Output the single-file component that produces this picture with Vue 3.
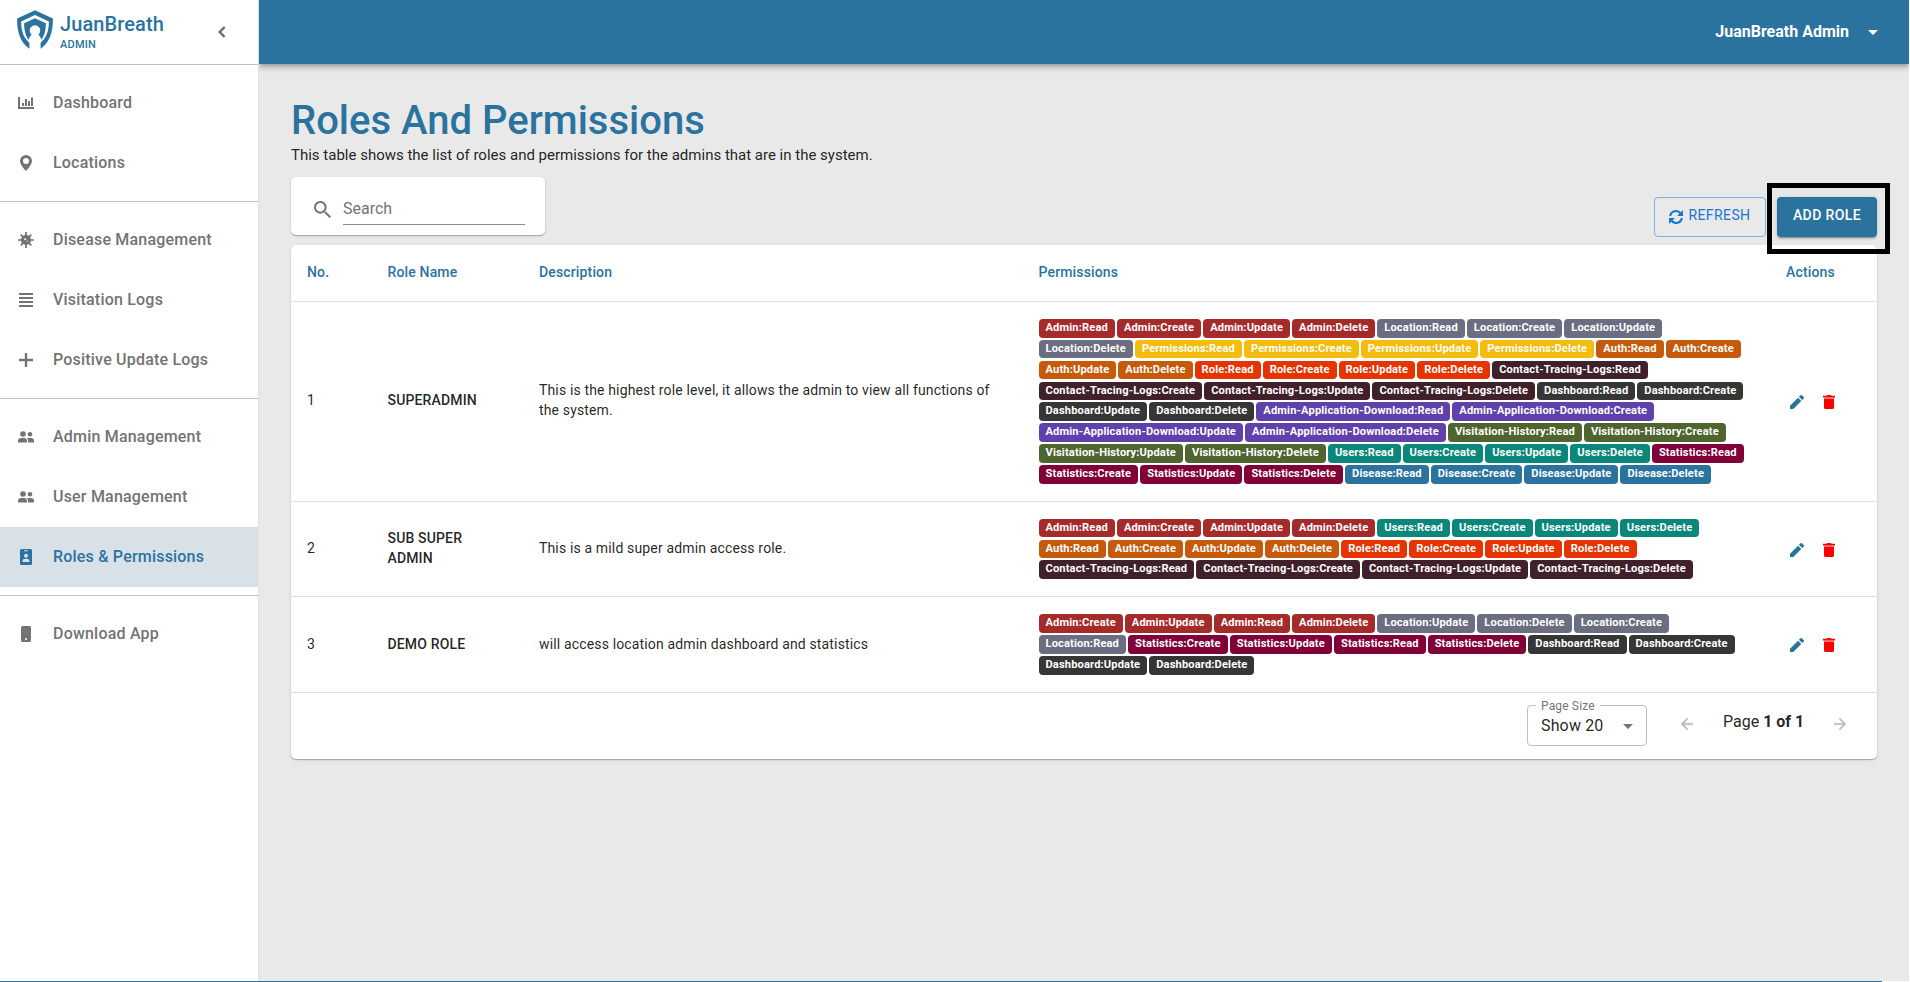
<script setup>
const groups = [
  [
    { label: 'Dashboard', icon: 'chart' },
    { label: 'Locations', icon: 'pin' },
  ],
  [
    { label: 'Disease Management', icon: 'virus' },
    { label: 'Visitation Logs', icon: 'lines' },
    { label: 'Positive Update Logs', icon: 'plus' },
  ],
  [
    { label: 'Admin Management', icon: 'people' },
    { label: 'User Management', icon: 'people' },
    { label: 'Roles & Permissions', icon: 'badge', active: true },
  ],
  [{ label: 'Download App', icon: 'phone' }],
]

// "Scope:Action,Action" expands to one chip for each action
const expand = (list) =>
  list.flatMap((entry) => {
    const [scope, actions] = entry.split(':')
    return actions.split(',').map((a) => ({ scope, text: scope + ':' + a }))
  })

const CRUD = 'Read,Create,Update,Delete'
const roles = [
  {
    name: 'SUPERADMIN',
    description: 'This is the highest role level, it allows the admin to view all functions of the system.',
    permissions: expand(
      ['Admin', 'Location', 'Permissions', 'Auth', 'Role', 'Contact-Tracing-Logs', 'Dashboard',
        'Admin-Application-Download', 'Visitation-History', 'Users', 'Statistics', 'Disease'].map((s) => s + ':' + CRUD)
    ),
  },
  {
    name: 'SUB SUPER ADMIN',
    description: 'This is a mild super admin access role.',
    permissions: expand(['Admin', 'Users', 'Auth', 'Role', 'Contact-Tracing-Logs'].map((s) => s + ':' + CRUD)),
  },
  {
    name: 'DEMO ROLE',
    description: 'will access location admin dashboard and statistics',
    permissions: expand([
      'Admin:Create,Update,Read,Delete',
      'Location:Update,Delete,Create,Read',
      'Statistics:Create,Update,Read,Delete',
      'Dashboard:Read,Create,Update,Delete',
    ]),
  },
]
</script>

<template>
  <div class="page">
    <div class="shell">
      <aside class="sidebar">
        <div class="brand">
          <svg class="logo" viewBox="51 31 108 118" fill="#2b739f">
            <path d="M105 32 159 57C160 95 150 130 122 148V130C139 116 147 95 147 66L105 46 63 66C63 95 71 116 88 130V148C60 130 50 95 51 57Z" />
            <path d="M105 56 138 71C138 94 132 112 124 121 122 113 119 109 115 106A16 16 0 1 0 95 106C91 109 88 113 86 121 78 112 72 94 72 71Z" />
          </svg>
          <div class="brand-text">
            <div class="brand-name">JuanBreath</div>
            <div class="brand-sub">ADMIN</div>
          </div>
          <svg class="collapse" viewBox="0 0 24 24" fill="#666" stroke="#666" stroke-width=".6"><path d="M15.41 7.41 14 6l-6 6 6 6 1.41-1.41L10.83 12z" /></svg>
        </div>
        <nav>
          <ul v-for="(group, gi) in groups" :key="gi" class="group">
            <li v-for="item in group" :key="item.label" class="item" :class="{ active: item.active }">
              <svg class="icon" viewBox="0 0 16 16" fill="currentColor">
                <template v-if="item.icon === 'chart'">
                  <path d="M0 2h2v10h14v2H0zM4 8h2v3H4zM7 4h2v7H7zM10 6h2v5h-2zM13 2.500h2V11h-2z" />
                </template>
                <path v-else-if="item.icon === 'pin'" fill-rule="evenodd" d="M8 0a6 6 0 0 0-6 6c0 4 6 10 6 10s6-6 6-10a6 6 0 0 0-6-6m0 9a3 3 0 1 1 0-6 3 3 0 0 1 0 6" />
                <g v-else-if="item.icon === 'virus'" stroke="currentColor" stroke-width="1.7">
                  <path d="M8 0v16M0 8h16M2.700 2.700l10.600 10.600M13.300 2.700 2.700 13.300" />
                  <circle cx="8" cy="8" r="4.200" />
                  <circle cx="7.200" cy="7.200" r="1" fill="#fff" stroke="none" />
                  <circle cx="9.300" cy="9" r=".6" fill="#fff" stroke="none" />
                </g>
                <path v-else-if="item.icon === 'lines'" d="M1 1h14v2H1zM1 5h14v2H1zM1 9h14v2H1zM1 13h14v2H1z" />
                <path v-else-if="item.icon === 'plus'" d="M6.800 1h2.400v5.800H15v2.400H9.200V15H6.800V9.200H1V6.800h5.800z" />
                <g v-else-if="item.icon === 'people'">
                  <circle cx="5" cy="5" r="2.800" />
                  <circle cx="12" cy="5.300" r="2.300" />
                  <path d="M0 13.500V12c0-2 1.500-3 3-3h3c1.800 0 3 1 3 3v1.500zM10 13.500V12c0-1.200-.4-2.200-1-3h4c2 0 3 1.300 3 3v1.500z" />
                </g>
                <path v-else-if="item.icon === 'badge'" fill-rule="evenodd" d="M3.500 0h9A1.500 1.500 0 0 1 14 1.500v13a1.500 1.500 0 0 1-1.500 1.500h-9A1.500 1.500 0 0 1 2 14.500v-13A1.500 1.500 0 0 1 3.500 0M6 1.200v1h4v-1zM8 4.800a2 2 0 1 0 0 4 2 2 0 0 0 0-4M4.500 13h7v-.7c0-1.700-1.200-2.500-2.500-2.500H7c-1.300 0-2.500.8-2.500 2.500z" />
                <path v-else fill-rule="evenodd" d="M4.500 0h7A1.500 1.500 0 0 1 13 1.500v13a1.500 1.500 0 0 1-1.500 1.500h-7A1.500 1.500 0 0 1 3 14.500v-13A1.500 1.500 0 0 1 4.500 0M8 12a1 1 0 1 0 0 2 1 1 0 0 0 0-2" />
              </svg>
              <span>{{ item.label }}</span>
            </li>
          </ul>
        </nav>
      </aside>

      <div class="content">
        <header class="topbar">
          <span class="user">JuanBreath Admin</span>
          <svg class="caret" viewBox="0 0 10 5" fill="#fff"><path d="M0 0h10L5 5z" /></svg>
        </header>

        <main>
          <h1>Roles And Permissions</h1>
          <p class="lead">This table shows the list of roles and permissions for the admins that are in the system.</p>

          <div class="toolbar">
            <div class="search card">
              <svg class="search-icon" viewBox="3 3 17.500 17.500" fill="#757575"><path d="M15.500 14h-.79l-.28-.27C15.410 12.590 16 11.110 16 9.500 16 5.910 13.090 3 9.500 3S3 5.910 3 9.500 5.910 16 9.500 16c1.610 0 3.090-.59 4.230-1.570l.27.28v.79l5 4.990L20.490 19zm-6 0C7.010 14 5 11.990 5 9.500S7.010 5 9.500 5 14 7.010 14 9.500 11.990 14 9.500 14" /></svg>
              <div class="search-field">Search</div>
            </div>
            <div class="buttons">
              <button class="btn refresh">
                <svg class="refresh-icon" viewBox="0 0 14 14" fill="none" stroke="#1976d2" stroke-width="2.100">
                  <path d="M1.200 6A5.700 5.700 0 0 1 11.600 3.600M12.800 8A5.700 5.700 0 0 1 2.400 10.400" />
                  <path d="M14 0V5.900H8.100zM0 14V8.100H5.900z" fill="#1976d2" stroke="none" />
                </svg>
                <span>REFRESH</span>
              </button>
              <button class="btn add"><span>ADD ROLE</span></button>
            </div>
          </div>

          <section class="card table">
            <div class="row head">
              <div>No.</div><div>Role Name</div><div>Description</div><div>Permissions</div><div>Actions</div>
            </div>
            <div v-for="(role, i) in roles" :key="role.name" class="row">
              <div class="cell">{{ i + 1 }}</div>
              <div class="cell role-name">{{ role.name }}</div>
              <div class="cell">{{ role.description }}</div>
              <div class="chips">
                <span v-for="p in role.permissions" :key="p.text" class="chip" :class="p.scope.toLowerCase()">{{ p.text }}</span>
              </div>
              <div class="actions">
                <svg class="edit" viewBox="0 0 14 14" fill="#2b739f"><path d="M0 14v-3.300L8 2.700 11.300 6l-8 8zM8.900 1.800 10.300.4a1.300 1.300 0 0 1 1.800 0L13.600 1.900a1.300 1.300 0 0 1 0 1.800L12.200 5.100z" /></svg>
                <svg class="delete" viewBox="0 0 12 14" fill="#f00"><path d="M0 .8h3.500L4.300 0h3.400l.8.8H12v1.700H0zM1 3.800h10v8.700A1.500 1.500 0 0 1 9.500 14h-7A1.500 1.500 0 0 1 1 12.500z" /><path d="M1 2.500h10v1.300H1z" opacity=".5" /></svg>
              </div>
            </div>
            <div class="footer">
              <fieldset class="select">
                <legend>Page Size</legend>
                <span class="select-value">Show 20</span>
                <svg class="select-caret" viewBox="0 0 10 5" fill="#757575"><path d="M0 0h10L5 5z" /></svg>
              </fieldset>
              <svg class="arrow prev" viewBox="4 4 16 16" fill="#bdbdbd" stroke="#bdbdbd" stroke-width=".6"><path d="M20 11H7.830l5.590-5.590L12 4l-8 8 8 8 1.410-1.410L7.830 13H20z" /></svg>
              <span class="page-no">Page <b>1 of 1</b></span>
              <svg class="arrow" viewBox="4 4 16 16" fill="#bdbdbd" stroke="#bdbdbd" stroke-width=".6"><path d="m12 4-1.410 1.410L16.170 11H4v2h12.170l-5.580 5.590L12 20l8-8z" /></svg>
            </div>
          </section>
        </main>
      </div>
    </div>
    <div class="bottom-line"></div>
  </div>
</template>

<style>
body { background: #fff; }
</style>

<style scoped>
*, *::after { box-sizing: border-box; }
.page { height: 982px; padding-right: 1px; font-family: Roboto, "Liberation Sans", sans-serif; color: rgba(0, 0, 0, 0.87); overflow: hidden; }
.shell { display: flex; height: 981px; }
.bottom-line { height: 1px; width: 1882px; background: #2b739f; }
svg { display: block; flex: none; }

.sidebar { width: 259px; flex: none; border-right: 1px solid #e0e0e0; background: #fff; }
.brand { height: 64px; display: flex; padding: 10px 0 0 17px; color: #2b739f; }
.logo { width: 36px; height: 39px; }
.brand-text { width: 148px; margin-left: 7px; padding-top: 2px; }
.brand-name { font-size: 20px; line-height: 24px; font-weight: 500; letter-spacing: 0.1px; white-space: nowrap; }
.brand-sub { font-size: 11px; line-height: 14px; font-weight: 500; margin-top: 2px; letter-spacing: 0.2px; }
.collapse { width: 22px; height: 22px; margin: 11px 0 0 3px; }
.group { list-style: none; margin: 0; padding: 8px 0; border-top: 1px solid #c2c2c2; }
.item { height: 60px; display: flex; align-items: center; padding-left: 18px; gap: 19px; color: #737373; font-size: 16px; font-weight: 500; letter-spacing: 0.2px; }
.item span { padding-bottom: 2px; }
.item.active { background: #d9e1e8; color: #2b739f; }
.icon { width: 16px; height: 16px; }

.content { flex: 1; background: #e9e9e9; }
.topbar { height: 64px; background: #2b739f; color: #fff; display: flex; justify-content: flex-end; align-items: center; padding-right: 31px; font-size: 16px; font-weight: 700; box-shadow: 0 2px 4px -1px rgba(0,0,0,.2), 0 4px 5px rgba(0,0,0,.14), 0 1px 10px rgba(0,0,0,.12); clip-path: inset(0 0 -20px 0); }
.user { padding-bottom: 2px; }
.caret { width: 10px; height: 5px; margin-left: 19px; }
main { padding: 32px 32px 0; }
h1 { margin: 0; padding-top: 1px; font-size: 40px; line-height: 47px; font-weight: 500; color: #2b739f; }
.lead { margin: 0; font-size: 15px; line-height: 22px; }
.card { background: #fff; border-radius: 5px; box-shadow: 0 1px 1px rgba(0,0,0,.22), 0 1px 3px rgba(0,0,0,.12); }
.toolbar { display: flex; justify-content: space-between; margin-top: 11px; height: 68px; }
.search { width: 254px; height: 58px; display: flex; padding-left: 23px; }
.search-icon { width: 17px; height: 17px; margin-top: 24px; }
.search-field { width: 182px; height: 48px; margin-left: 12px; padding-top: 20px; border-bottom: 1px solid #8c8c8c; font-size: 16px; line-height: 23px; color: #757575; }
.buttons { display: flex; gap: 11px; padding-top: 20px; }
.btn { font-family: inherit; height: 40px; border-radius: 4px; display: flex; align-items: center; justify-content: center; font-size: 14px; padding: 0 0 4px; letter-spacing: 0.4px; }
.refresh { width: 112px; border: 1px solid #7fb0e2; background: none; color: #1976d2; gap: 5px; }
.refresh-icon { width: 14px; height: 14px; margin-top: 4px; }
.add { position: relative; width: 100px; border: 0; background: #2b739f; color: #fff; font-weight: 500; box-shadow: 0 3px 1px -2px rgba(0,0,0,.2), 0 2px 2px rgba(0,0,0,.14), 0 1px 5px rgba(0,0,0,.12); }
/* highlight frame over the call-to-action */
.add::after { content: ""; position: absolute; left: -10px; top: -14px; width: 123px; height: 71px; border: 5px solid #000; }

.table { height: 514px; font-size: 14px; line-height: 20px; }
.row { display: grid; grid-template-columns: 80.500px 151.500px 499.500px 747.500px 1fr; align-items: center; border-bottom: 1px solid #e0e0e0; letter-spacing: 0.15px; }
.row > div { padding: 16px; }
.row > .cell { padding-bottom: 18px; }
.row.head { height: 57px; font-weight: 500; color: #2b739f; padding-bottom: 2px; }
.role-name { font-weight: 500; }
.chips { display: flex; flex-wrap: wrap; gap: 2.260px 2px; }
.row > .chips { padding: 17px 16px 17.300px; }
.chip { height: 18.600px; padding: 0 7px; border-radius: 4px; font-size: 11.100px; line-height: 18px; font-weight: 700; color: #fff; background: #2b739f; white-space: nowrap; }
.admin { background: #a52a2a; }
.location { background: #6b6d80; }
.permissions { background: #f4bc0d; }
.auth { background: #c65a0b; }
.role { background: #e63400; }
.contact-tracing-logs { background: #40202a; }
.dashboard { background: #363636; }
.admin-application-download { background: #6040ab; }
.visitation-history { background: #4e6530; }
.users { background: #0a877a; }
.statistics { background: #800037; }
.actions { display: flex; gap: 19px; }
.row > .actions { padding: 17px 0 16px 20px; }
.edit { width: 14px; height: 14px; }
.delete { width: 12px; height: 14px; }

.footer { display: flex; height: 66px; padding: 0 31px 0 0; justify-content: flex-end; font-size: 16px; }
.select { position: relative; width: 120px; height: 46px; margin: 7px 0 0; padding: 0 0 0 13px; border: 1px solid #c0c0c0; border-radius: 4px; display: flex; align-items: flex-start; }
.select legend { margin-left: -5px; padding: 0 5px; font-size: 12px; line-height: 12px; height: 12px; color: #757575; letter-spacing: 0.15px; }
.select-value { padding-top: 4px; letter-spacing: 0.15px; }
.select-caret { width: 10px; height: 5px; margin: 12px 0 0 20px; }
.arrow { width: 12px; height: 12px; margin-top: 25px; }
.prev { margin-left: 34px; }
.page-no { width: 80px; margin: 19px 31px 0 30px; white-space: nowrap; }
.page-no b { font-weight: 700; }
</style>
